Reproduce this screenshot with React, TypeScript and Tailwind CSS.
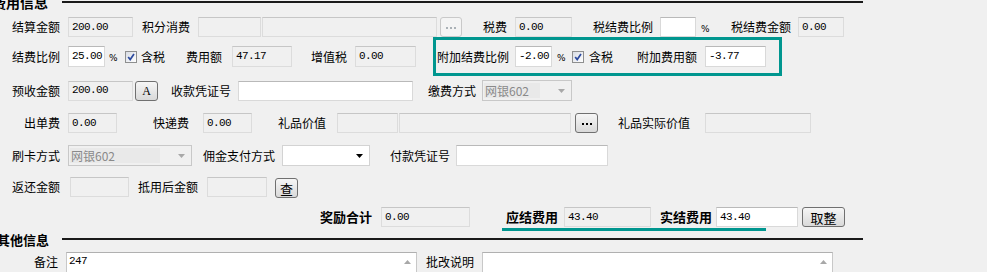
import React from "react";

function L({ children, cls = "" }: { children: React.ReactNode; cls?: string }) {
  return (
    <span className={`shrink-0 text-[12px] leading-[14px] whitespace-nowrap text-black ${cls}`}>
      {children}
    </span>
  );
}

function LB({ children, cls = "" }: { children: React.ReactNode; cls?: string }) {
  return (
    <span className={`shrink-0 text-[13px] leading-[14px] font-bold whitespace-nowrap text-black ${cls}`}>
      {children}
    </span>
  );
}

function F({ v = "", cls, white = false }: { v?: string; cls: string; white?: boolean }) {
  return (
    <div
      className={`${cls} shrink-0 flex items-center pl-[3px] border overflow-hidden ${
        white
          ? "bg-white border-[#d9d9d9] border-t-[#b9b9b9]"
          : "bg-[#f0f0f0] border-[#dcdcdc] border-t-[#c6c6c6]"
      } font-['Liberation_Mono',monospace] text-[11px] tracking-[-0.6px] text-black leading-none`}
    >
      {v}
    </div>
  );
}

function Pct({ cls }: { cls: string }) {
  return (
    <span className={`${cls} shrink-0 w-[8px] text-[9px] leading-none text-black mt-[4px] font-['DejaVu_Sans',sans-serif]`}>%</span>
  );
}

function CB({ cls }: { cls: string }) {
  return (
    <div
      className={`${cls} shrink-0 w-[12px] h-[12px] border border-[#8e8f8f] bg-linear-to-br from-[#d8dce4] to-[#ffffff] flex items-center justify-center`}
    >
      <svg width="8" height="8" viewBox="0 0 8 8">
        <path d="M1.2 4 L3.2 6.6 L7 1" stroke="#2c4a9e" strokeWidth="1.7" fill="none" />
      </svg>
    </div>
  );
}

function Btn({ cls, children, disabled = false }: { cls: string; children: React.ReactNode; disabled?: boolean }) {
  return (
    <div
      className={`${cls} shrink-0 flex items-center justify-center rounded-[3px] border ${
        disabled
          ? "border-[#c9c9c9] bg-[#f4f4f4]"
          : "border-[#707070] bg-linear-to-b from-[#f6f6f6] to-[#d9d9d9]"
      }`}
    >
      {children}
    </div>
  );
}

function Dots({ gray = false }: { gray?: boolean }) {
  const c = gray ? "bg-[#aab1b6]" : "bg-black";
  return (
    <div className="flex gap-[2px] mt-[1px]">
      <i className={`block w-[2px] h-[2px] ${c}`} />
      <i className={`block w-[2px] h-[2px] ${c}`} />
      <i className={`block w-[2px] h-[2px] ${c}`} />
    </div>
  );
}

function Sel({ cls, text = "", disabled = false }: { cls: string; text?: string; disabled?: boolean }) {
  return (
    <div
      className={`${cls} shrink-0 flex items-center border ${
        disabled ? "bg-[#f0f0f0] border-[#c8c8c8]" : "bg-white border-[#d3d3d3]"
      }`}
    >
      {disabled ? (
        <span className="self-stretch my-[2px] ml-[1px] flex-1 mr-[18px] bg-[#e9e9e9] flex items-center text-[12px] leading-none text-[#8a8a8a] pl-[1px]">
          {text}
        </span>
      ) : (
        <span className="flex-1" />
      )}
      <svg className="mr-[6px] shrink-0" width="7" height="4" viewBox="0 0 7 4">
        <polygon points="0,0 7,0 3.5,4" fill={disabled ? "#a8a8a8" : "#000"} />
      </svg>
    </div>
  );
}

function TA({ cls, v = "" }: { cls: string; v?: string }) {
  return (
    <div className={`${cls} shrink-0 h-[30px] bg-white border border-[#c8c8c8] border-t-[#b0b0b0] flex`}>
      <span className="flex-1 pl-[2px] pt-[3px] font-['Liberation_Mono',monospace] text-[11px] tracking-[-0.6px] leading-none text-black">
        {v}
      </span>
      <div className="w-[17px] flex justify-center pt-[7px]">
        <svg width="7" height="4" viewBox="0 0 7 4">
          <polygon points="0,4 7,4 3.5,0" fill="#a8a8a8" />
        </svg>
      </div>
    </div>
  );
}

export default function App() {
  return (
    <div className="w-[987px] h-[272px] overflow-hidden bg-[#f0f0f0] font-['Noto_Sans_CJK_SC',sans-serif] flex flex-col">
      {/* header 1 */}
      <div className="h-[4px] flex items-center shrink-0">
        <div className="w-[62px] shrink-0 flex items-center">
          <span className="ml-[-8px] text-[14px] leading-none font-bold whitespace-nowrap text-black">费用信息</span>
        </div>
        <div className="w-[801px] h-[2px] bg-[#1a1a1a]" />
      </div>

      {/* row 1 */}
      <div className="mt-[13px] h-[20px] flex items-center shrink-0">
        <L cls="ml-[12px]">结算金额</L>
        <F cls="ml-[8px] w-[65px] h-[20px]" v="200.00" />
        <L cls="ml-[9px]">积分消费</L>
        <F cls="ml-[8px] w-[63px] h-[20px]" />
        <F cls="ml-[1px] w-[175px] h-[20px]" />
        <Btn cls="ml-[3px] w-[22px] h-[20px]" disabled>
          <Dots gray />
        </Btn>
        <L cls="ml-[21px]">税费</L>
        <F cls="ml-[8px] w-[57px] h-[20px]" v="0.00" />
        <L cls="ml-[21px]">税结费比例</L>
        <F cls="ml-[7px] w-[36px] h-[20px]" white />
        <Pct cls="ml-[5px]" />
        <L cls="ml-[22px]">税结费金额</L>
        <F cls="ml-[7px] w-[46px] h-[20px]" v="0.00" />
      </div>

      {/* row 2 */}
      <div className="h-[39px] flex items-center shrink-0">
        <L cls="ml-[12px]">结费比例</L>
        <F cls="ml-[8px] w-[37px] h-[21px]" v="25.00" white />
        <Pct cls="ml-[4px]" />
        <CB cls="ml-[8px]" />
        <L cls="ml-[4px]">含税</L>
        <L cls="ml-[21px]">费用额</L>
        <F cls="ml-[10px] w-[60px] h-[21px]" v="47.17" />
        <L cls="ml-[19px]">增值税</L>
        <F cls="ml-[8px] w-[61px] h-[21px]" v="0.00" />
        <div className="ml-[17px] w-[349px] h-[39px] border-[3px] border-[#00968f] flex items-center shrink-0">
          <L cls="ml-[1px]">附加结费比例</L>
          <F cls="ml-[6px] w-[37px] h-[21px]" v="-2.00" white />
          <Pct cls="ml-[5px]" />
          <CB cls="ml-[7px]" />
          <L cls="ml-[5px]">含税</L>
          <L cls="ml-[24px]">附加费用额</L>
          <F cls="ml-[8px] w-[61px] h-[21px]" v="-3.77" white />
        </div>
      </div>

      {/* row 3 */}
      <div className="mt-[4px] h-[21px] flex items-center shrink-0">
        <L cls="ml-[12px]">预收金额</L>
        <F cls="ml-[8px] w-[65px] h-[20px]" v="200.00" />
        <Btn cls="ml-[2px] w-[23px] h-[20px]">
          <span className="font-['Liberation_Serif',serif] text-[12px] leading-none text-black">A</span>
        </Btn>
        <L cls="ml-[13px]">收款凭证号</L>
        <F cls="ml-[7px] w-[175px] h-[20px]" white />
        <L cls="ml-[15px]">缴费方式</L>
        <Sel cls="ml-[6px] w-[90px] h-[21px]" text="网银602" disabled />
      </div>

      {/* row 4 */}
      <div className="mt-[12px] h-[20px] flex items-center shrink-0">
        <L cls="ml-[24px]">出单费</L>
        <F cls="ml-[8px] w-[49px] h-[20px]" v="0.00" />
        <L cls="ml-[36px]">快递费</L>
        <F cls="ml-[14px] w-[49px] h-[20px]" v="0.00" />
        <L cls="ml-[26px]">礼品价值</L>
        <F cls="ml-[11px] w-[61px] h-[20px]" />
        <F cls="ml-[1px] w-[172px] h-[20px]" />
        <Btn cls="ml-[4px] w-[23px] h-[20px]">
          <Dots />
        </Btn>
        <L cls="ml-[20px]">礼品实际价值</L>
        <F cls="ml-[15px] w-[106px] h-[20px]" />
      </div>

      {/* row 5 */}
      <div className="mt-[12px] h-[21px] flex items-center shrink-0">
        <L cls="ml-[12px]">刷卡方式</L>
        <Sel cls="ml-[8px] w-[124px] h-[21px]" text="网银602" disabled />
        <L cls="ml-[11px]">佣金支付方式</L>
        <Sel cls="ml-[7px] w-[88px] h-[21px]" />
        <L cls="ml-[20px]">付款凭证号</L>
        <F cls="ml-[6px] w-[152px] h-[21px]" white />
      </div>

      {/* row 6 */}
      <div className="mt-[10px] h-[22px] flex items-center shrink-0">
        <L cls="ml-[12px]">返还金额</L>
        <F cls="ml-[10px] w-[59px] h-[20px]" />
        <L cls="ml-[9px]">抵用后金额</L>
        <F cls="ml-[9px] w-[60px] h-[20px]" />
        <Btn cls="ml-[8px] w-[23px] h-[20px] mt-[2px]">
          <span className="text-[13px] leading-none text-black">查</span>
        </Btn>
      </div>

      {/* row 7 */}
      <div className="mt-[9px] h-[20px] flex items-center shrink-0">
        <LB cls="ml-[320px]">奖励合计</LB>
        <F cls="ml-[9px] w-[89px] h-[20px]" v="0.00" />
        <LB cls="ml-[36px]">应结费用</LB>
        <F cls="ml-[6px] w-[87px] h-[20px]" v="43.40" />
        <LB cls="ml-[9px]">实结费用</LB>
        <F cls="ml-[4px] w-[82px] h-[20px]" v="43.40" white />
        <Btn cls="ml-[4px] w-[43px] h-[20px]">
          <span className="text-[13px] leading-none text-black">取整</span>
        </Btn>
      </div>

      {/* teal underline */}
      <div className="mt-[1px] ml-[502px] w-[264px] h-[3px] bg-[#00968f] shrink-0" />

      {/* header 2 */}
      <div className="mt-[6px] h-[4px] flex items-center shrink-0">
        <div className="w-[62px] shrink-0 flex items-center">
          <span className="ml-[-3px] text-[13px] leading-none font-bold whitespace-nowrap text-black">其他信息</span>
        </div>
        <div className="w-[801px] h-[2px] bg-[#1a1a1a]" />
      </div>

      {/* row 9 */}
      <div className="mt-[11px] flex items-start shrink-0">
        <L cls="ml-[34px] mt-[3px]">备注</L>
        <TA cls="ml-[8px] w-[351px]" v="247" />
        <L cls="ml-[9px] mt-[3px]">批改说明</L>
        <TA cls="ml-[8px] w-[351px]" />
      </div>
    </div>
  );
}
